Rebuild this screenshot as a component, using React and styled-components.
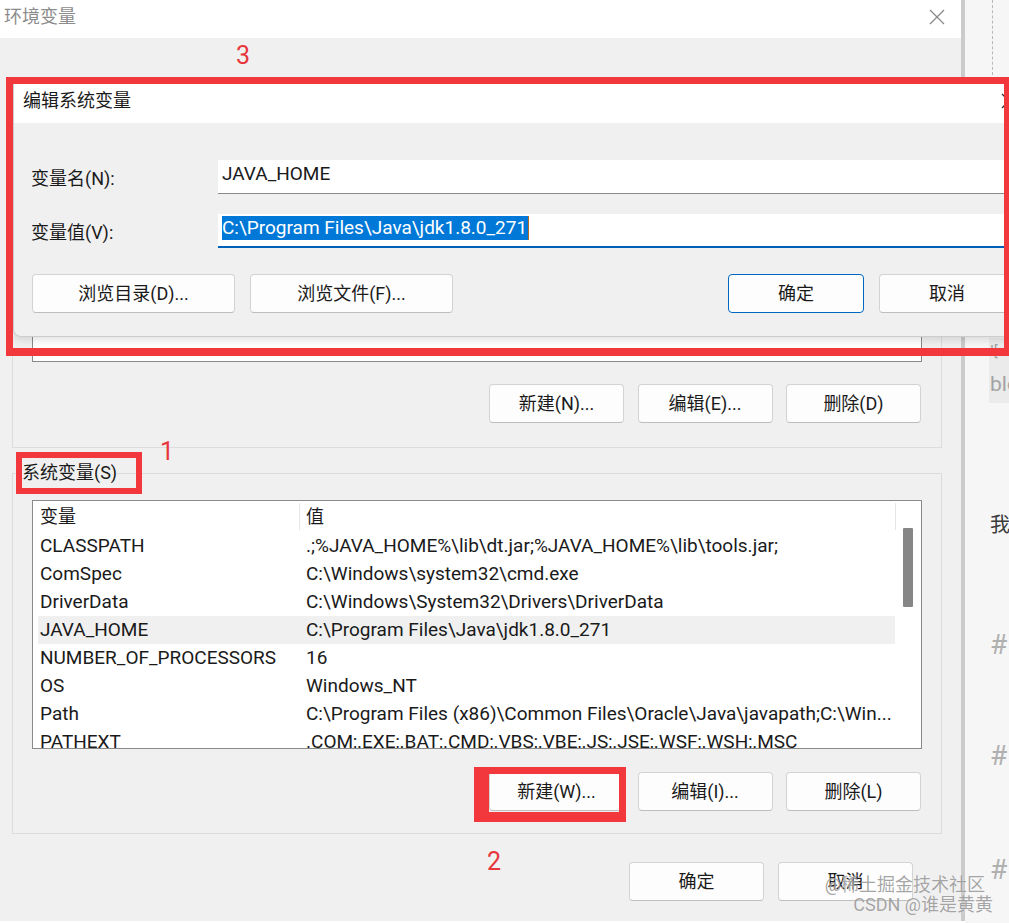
import React from 'react';
import styled, { createGlobalStyle } from 'styled-components';

const GlobalStyle = createGlobalStyle`
  html, body { margin: 0; padding: 0; }
  body {
    width: 1009px; height: 923px; overflow: hidden; background: #ffffff;
    font-family: Roboto, "Noto Sans CJK SC", sans-serif;
    color: #1a1a1a;
  }
  * { box-sizing: border-box; }
`;

const Page = styled.div`
  position: relative;
  display: flex;
  width: 1009px;
  height: 923px;
  overflow: hidden;
  background: #ffffff;
`;

const Window = styled.div`
  width: 965px;
  height: 921px;
  flex: none;
  display: flex;
  flex-direction: column;
  background: #f0f0f0;
  border-right: 4px solid #cbcbcb;
`;

const TitleBar = styled.div`
  height: 38px;
  flex: none;
  display: flex;
  align-items: center;
  justify-content: space-between;
  padding: 0 16px 5px 4px;
  background: #ffffff;
  font-size: 18px;
  line-height: 24px;
  color: #8c8c8c;
`;

const CloseGlyph = ({ color = '#8a8a8a' }) => (
  <svg width="16" height="16" viewBox="0 0 16 16">
    <path d="M1 1 L15 15 M15 1 L1 15" stroke={color} strokeWidth="1.3" fill="none" />
  </svg>
);

const WindowBody = styled.div`
  display: flex;
  flex-direction: column;
  padding-top: 45px;
`;

const Group = styled.fieldset`
  margin: ${p => p.$mt}px 0 0 12px;
  width: 930px;
  border: 1px solid #dcdcdc;
  padding: 0;
  min-width: 0;
`;

const Legend = styled.legend`
  margin-left: 9px;
  padding: 0;
  font-size: 18px;
  line-height: 24px;
  color: #1a1a1a;
`;

const GroupBody = styled.div`
  display: flex;
  flex-direction: column;
  padding: ${p => p.$pt}px 19px ${p => p.$pb}px 19px;
`;

const ListBox = styled.div`
  height: ${p => p.$h}px;
  border: 1px solid #8a8a8a;
  background: #ffffff;
  display: flex;
  overflow: hidden;
`;

const ListContent = styled.div`
  flex: 1;
  min-width: 0;
  padding-left: 5px;
  overflow: hidden;
`;

const ScrollTrack = styled.div`
  width: 26px;
  flex: none;
  background: linear-gradient(#e6e6e6, #e6e6e6) no-repeat 0 2px / 1px 27px, #ffffff;
`;

const Thumb = styled.div`
  margin: 27px 0 0 8px;
  width: 10px;
  height: 79px;
  background: #868686;
  border-radius: 1px;
`;

const HeaderRow = styled.div`
  display: grid;
  grid-template-columns: 262px 1fr;
  height: 31px;
  align-items: center;
`;

const HeadCell = styled.div`
  height: 27px;
  line-height: 27px;
  font-size: 18px;
  padding-left: ${p => (p.$first ? 2 : 6)}px;
  border-right: ${p => (p.$first ? '1px solid #e6e6e6' : 'none')};
  white-space: nowrap;
`;

const Row = styled.div`
  display: grid;
  grid-template-columns: 262px 1fr;
  height: 28px;
  line-height: 28px;
  font-size: 19px;
  background: ${p => (p.$selected ? '#f0f0f0' : 'transparent')};
`;

const Cell = styled.div`
  padding-left: ${p => (p.$first ? 2 : 6)}px;
  white-space: nowrap;
  overflow: hidden;
`;

const ButtonRow = styled.div`
  display: flex;
  justify-content: flex-end;
  gap: ${p => p.$gap || 13.5}px;
  margin-top: ${p => p.$mt}px;
  padding-right: ${p => p.$pr || 0}px;
`;

const Button = styled.div`
  width: ${p => p.$w || 135}px;
  height: 39px;
  flex: none;
  display: flex;
  align-items: center;
  justify-content: center;
  background: #fdfdfd;
  border: 1px solid ${p => (p.$primary ? '#0067c0' : '#d3d3d3')};
  border-bottom-color: ${p => (p.$primary ? '#0067c0' : '#bdbdbd')};
  border-radius: 4px;
  font-size: 18px;
  line-height: 24px;
  color: #1a1a1a;
  white-space: nowrap;
`;

const BlogStrip = styled.div`
  flex: 1;
  display: flex;
  flex-direction: column;
  background: #f6f6f6;
`;

const DashedRule = styled.div`
  height: 75px;
  margin-left: 27px;
  border-left: 1px dashed #b8b8b8;
`;

const CodeBlock = styled.div`
  margin: 263px 0 0 24px;
  height: 65px;
  overflow: hidden;
  background: #ebebeb;
  color: #a3a3a3;
  white-space: nowrap;
`;

const CodeLine = styled.div`
  line-height: ${p => p.$lh}px;
  font-size: ${p => p.$fs || 21}px;
  padding-left: 1px;
`;

const BlogText = styled.div`
  margin: ${p => p.$mt}px 0 0 25px;
  font-size: ${p => p.$fs}px;
  line-height: ${p => p.$lh}px;
  color: ${p => p.$color};
  white-space: nowrap;
`;

/* overlays */
const Dialog = styled.div`
  position: absolute;
  left: 13px;
  top: 84px;
  width: 1022px;
  background: #f0f0f0;
  border: 1px solid #cdcdcd;
  border-top: none;
  border-radius: 0 0 8px 8px;
  box-shadow: 0 3px 8px rgba(0, 0, 0, 0.12);
  z-index: 2;
`;

const DialogTitle = styled.div`
  height: 39px;
  display: flex;
  align-items: center;
  justify-content: space-between;
  padding: 0 17px 6px 9px;
  background: #ffffff;
  font-size: 18px;
  line-height: 24px;
  color: #1a1a1a;
`;

const DialogBody = styled.div`
  display: flex;
  flex-direction: column;
  gap: 20px;
  padding: 37px 19px 23px 17px;
`;

const Field = styled.div`
  display: grid;
  grid-template-columns: 187px 1fr;
  align-items: center;
`;

const FieldLabel = styled.div`
  font-size: 18px;
  line-height: 24px;
  padding-top: 3px;
`;

const TextInput = styled.div`
  height: 34px;
  background: #ffffff;
  padding: 2px 0 0 4px;
  border-bottom: ${p => (p.$focused ? '2px solid #005fb8' : '1px solid #8a8a8a')};
  font-size: 19px;
  line-height: 24px;
  white-space: nowrap;
  overflow: hidden;
`;

const Selection = styled.span`
  display: inline-block;
  background: #0078d7;
  color: #ffffff;
  padding-right: 1px;
  border-right: 1px solid #b06a2a;
`;

const DialogButtons = styled.div`
  display: flex;
  gap: 15px;
  margin-top: 6px;
  padding-left: 1px;
`;

const Push = styled.div`
  flex: 1;
`;

const Highlight = styled.div`
  position: absolute;
  left: ${p => p.$x}px;
  top: ${p => p.$y}px;
  width: ${p => p.$w}px;
  height: ${p => p.$h}px;
  border: solid #f2373d;
  border-width: ${p => p.$bw};
  z-index: 3;
`;

const Num = styled.div`
  position: absolute;
  left: ${p => p.$x}px;
  top: ${p => p.$y}px;
  font-size: 25px;
  line-height: 26px;
  color: #e8363c;
  z-index: 3;
`;

const Watermark = styled.div`
  position: absolute;
  right: 16px;
  bottom: 8px;
  display: flex;
  flex-direction: column;
  align-items: flex-end;
  font-size: 18px;
  line-height: 20px;
  color: rgba(105, 105, 105, 0.6);
  text-shadow: 0 0 1px rgba(255, 255, 255, 0.9);
  z-index: 4;
  white-space: nowrap;
`;

const WatermarkLine = styled.div`
  padding-right: ${p => p.$pr || 0}px;
`;

const rows = [
  ['CLASSPATH', '.;%JAVA_HOME%\\lib\\dt.jar;%JAVA_HOME%\\lib\\tools.jar;'],
  ['ComSpec', 'C:\\Windows\\system32\\cmd.exe'],
  ['DriverData', 'C:\\Windows\\System32\\Drivers\\DriverData'],
  ['JAVA_HOME', 'C:\\Program Files\\Java\\jdk1.8.0_271', true],
  ['NUMBER_OF_PROCESSORS', '16'],
  ['OS', 'Windows_NT'],
  ['Path', 'C:\\Program Files (x86)\\Common Files\\Oracle\\Java\\javapath;C:\\Win...'],
  ['PATHEXT', '.COM;.EXE;.BAT;.CMD;.VBS;.VBE;.JS;.JSE;.WSF;.WSH;.MSC'],
];

export default function App() {
  return (
    <>
      <GlobalStyle />
      <Page>
        <Window>
          <TitleBar>
            <span>环境变量</span>
            <CloseGlyph />
          </TitleBar>
          <WindowBody>
            <Group $mt={12}>
              <GroupBody $pt={26} $pb={24}>
                <ListBox $h={240}>
                  <ListContent />
                  <ScrollTrack />
                </ListBox>
                <ButtonRow $mt={22} $pr={1}>
                  <Button>新建(N)...</Button>
                  <Button>编辑(E)...</Button>
                  <Button>删除(D)</Button>
                </ButtonRow>
              </GroupBody>
            </Group>
            <Group $mt={13}>
              <Legend>系统变量(S)</Legend>
              <GroupBody $pt={15} $pb={22}>
                <ListBox $h={249}>
                  <ListContent>
                    <HeaderRow>
                      <HeadCell $first>变量</HeadCell>
                      <HeadCell>值</HeadCell>
                    </HeaderRow>
                    {rows.map(([name, value, sel]) => (
                      <Row key={name} $selected={sel}>
                        <Cell $first>{name}</Cell>
                        <Cell>{value}</Cell>
                      </Row>
                    ))}
                  </ListContent>
                  <ScrollTrack>
                    <Thumb />
                  </ScrollTrack>
                </ListBox>
                <ButtonRow $mt={23} $pr={1}>
                  <Button>新建(W)...</Button>
                  <Button>编辑(I)...</Button>
                  <Button>删除(L)</Button>
                </ButtonRow>
              </GroupBody>
            </Group>
            <ButtonRow $mt={28} $pr={48} $gap={14}>
              <Button>确定</Button>
              <Button>取消</Button>
            </ButtonRow>
          </WindowBody>
        </Window>

        <BlogStrip>
          <DashedRule />
          <CodeBlock>
            <CodeLine $lh={26} $fs={15}>![</CodeLine>
            <CodeLine $lh={40}>blo</CodeLine>
          </CodeBlock>
          <BlogText $mt={107} $fs={20} $lh={30} $color="#3a3a3a">我</BlogText>
          <BlogText $mt={87} $fs={28} $lh={36} $color="#b0b0b0">#</BlogText>
          <BlogText $mt={75} $fs={28} $lh={36} $color="#b0b0b0">#</BlogText>
          <BlogText $mt={78} $fs={28} $lh={36} $color="#b0b0b0">#</BlogText>
        </BlogStrip>

        <Dialog>
          <DialogTitle>
            <span>编辑系统变量</span>
            <CloseGlyph color="#333333" />
          </DialogTitle>
          <DialogBody>
            <Field>
              <FieldLabel>变量名(N):</FieldLabel>
              <TextInput>JAVA_HOME</TextInput>
            </Field>
            <Field>
              <FieldLabel>变量值(V):</FieldLabel>
              <TextInput $focused>
                <Selection>C:\Program Files\Java\jdk1.8.0_271</Selection>
              </TextInput>
            </Field>
            <DialogButtons>
              <Button $w={203}>浏览目录(D)...</Button>
              <Button $w={203}>浏览文件(F)...</Button>
              <Push />
              <Button $w={136} $primary>确定</Button>
              <Button $w={136}>取消</Button>
            </DialogButtons>
          </DialogBody>
        </Dialog>

        <Highlight $x={6} $y={77} $w={1005} $h={279} $bw="7px 7px 8px 7px" />
        <Highlight $x={16} $y={452} $w={126} $h={42} $bw="6px" />
        <Highlight $x={474} $y={767} $w={152} $h={55} $bw="7px 7px 10px 15px" />

        <Num $x={236} $y={43}>3</Num>
        <Num $x={160} $y={439}>1</Num>
        <Num $x={487} $y={849}>2</Num>

        <Watermark>
          <WatermarkLine $pr={8}>@稀土掘金技术社区</WatermarkLine>
          <WatermarkLine>CSDN @谁是黄黄</WatermarkLine>
        </Watermark>
      </Page>
    </>
  );
}
